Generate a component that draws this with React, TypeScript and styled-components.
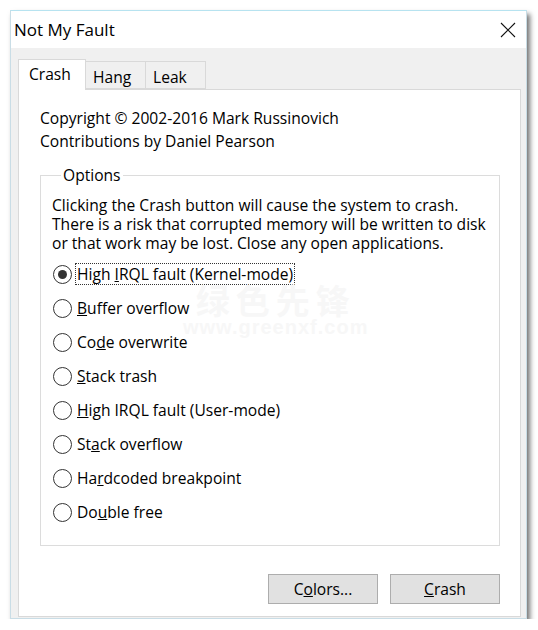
import React from "react";
import styled, { createGlobalStyle } from "styled-components";

const Global = createGlobalStyle`
  html, body { margin: 0; padding: 0; background: #ffffff; }
  body { font-family: "Open Sans", "Noto Sans", sans-serif; color: #000; }
`;

const Window = styled.div`
  margin: 10px 0 0 10px;
  width: 517px;
  height: 609px;
  box-sizing: border-box;
  display: flex;
  flex-direction: column;
  border: 1px solid #c9dde6;
  border-top-color: #b7e3f0;
  background: #f0f0f0;
  box-shadow: 3px 4px 5px rgba(0, 0, 0, 0.55);
`;

const TitleBar = styled.div`
  height: 37px;
  flex: none;
  background: #ffffff;
  display: flex;
  align-items: center;
  justify-content: space-between;
  padding: 0 10px 0 3px;
  font-size: 17px;
`;

const Close = styled.div`
  width: 16px;
  height: 16px;
  display: flex;
`;

const Body = styled.div`
  flex: 1;
  display: flex;
  flex-direction: column;
  padding: 11px 5px 1px 7px;
  position: relative;
`;

const TabRow = styled.div`
  display: flex;
  align-items: flex-end;
  height: 30px;
  flex: none;
`;

const Tab = styled.div<{ $active?: boolean }>`
  box-sizing: border-box;
  height: ${(p) => (p.$active ? "31px" : "28px")};
  margin-bottom: ${(p) => (p.$active ? "-1px" : "0")};
  width: ${(p) => (p.$active ? "68px" : "61px")};
  background: ${(p) => (p.$active ? "#ffffff" : "#f0f0f0")};
  border: 1px solid #d9d9d9;
  border-bottom: ${(p) => (p.$active ? "none" : "1px solid #d9d9d9")};
  margin-left: ${(p) => (p.$active ? "0" : "-1px")};
  padding: ${(p) => (p.$active ? "3px 0 0 10px" : "4px 0 0 7px")};
  font-size: 15.6px;
  position: relative;
  z-index: ${(p) => (p.$active ? 1 : 0)};
`;

const Panel = styled.div`
  flex: 1;
  background: #ffffff;
  border: 1px solid #d9d9d9;
  display: flex;
  flex-direction: column;
  padding: 17px 20px 0 21px;
`;

const InfoLine = styled.div`
  font-size: 15.6px;
  line-height: 23px;
`;

const Group = styled.fieldset`
  margin: 12px 0 0 0;
  border: 1px solid #dcdcdc;
  padding: 0 0 21px 11px;
  height: 381px;
  box-sizing: border-box;
`;

const Legend = styled.legend`
  font-size: 15.6px;
  padding: 0 2px;
  margin-left: 9px;
  line-height: 20px;
`;

const Desc = styled.div`
  font-size: 15.6px;
  line-height: 19px;
  margin-top: 11px;
  margin-bottom: 4px;
`;

const Options = styled.div`
  display: flex;
  flex-direction: column;
`;

const Option = styled.label`
  display: flex;
  align-items: center;
  height: 34px;
  font-size: 15.6px;
  cursor: default;
`;

const Circle = styled.span<{ $on?: boolean }>`
  width: 19px;
  height: 19px;
  box-sizing: border-box;
  flex: none;
  border: 1.5px solid #333333;
  border-radius: 50%;
  background: #ffffff;
  display: flex;
  align-items: center;
  justify-content: center;
  margin-left: 1px;
  margin-right: 4px;
  &::after {
    content: "";
    width: 9px;
    height: 9px;
    border-radius: 50%;
    background: ${(p) => (p.$on ? "#333333" : "transparent")};
  }
`;

const Label = styled.span<{ $focus?: boolean }>`
  padding: 0 1px;
  line-height: 20px;
  outline: ${(p) => (p.$focus ? "1px dotted #333" : "none")};
`;

const Footer = styled.div`
  display: flex;
  justify-content: flex-end;
  gap: 12px;
  margin-top: 28px;
`;

const Button = styled.div`
  width: 110px;
  height: 30px;
  box-sizing: border-box;
  background: #e1e1e1;
  border: 1px solid #adadad;
  display: flex;
  align-items: center;
  justify-content: center;
  font-size: 15.6px;
`;

const Watermark = styled.div`
  position: absolute;
  left: 172px;
  top: 235px;
  color: #f7f7f7;
  font-family: "Noto Sans CJK SC", sans-serif;
  font-weight: 700;
  text-align: center;
  line-height: 1;
  pointer-events: none;
`;

const WmBig = styled.div`
  font-size: 34px;
  letter-spacing: 6px;
`;

const WmSmall = styled.div`
  font-family: "Liberation Sans", sans-serif;
  font-size: 20px;
  letter-spacing: 1px;
`;

const items: { pre: string; key: string; post: string; on?: boolean }[] = [
  { pre: "High ", key: "I", post: "RQL fault (Kernel-mode)", on: true },
  { pre: "", key: "B", post: "uffer overflow" },
  { pre: "Co", key: "d", post: "e overwrite" },
  { pre: "", key: "S", post: "tack trash" },
  { pre: "", key: "H", post: "igh IRQL fault (User-mode)" },
  { pre: "St", key: "a", post: "ck overflow" },
  { pre: "Ha", key: "r", post: "dcoded breakpoint" },
  { pre: "Do", key: "u", post: "ble free" },
];

export default function App() {
  return (
    <>
      <Global />
      <Window>
        <TitleBar>
          <span>Not My Fault</span>
          <Close>
            <svg width="16" height="16" viewBox="0 0 16 16">
              <path d="M1 1 L15 15 M15 1 L1 15" stroke="#111" strokeWidth="1.1" />
            </svg>
          </Close>
        </TitleBar>
        <Body>
          <TabRow>
            <Tab $active>Crash</Tab>
            <Tab>Hang</Tab>
            <Tab>Leak</Tab>
          </TabRow>
          <Panel>
            <InfoLine>Copyright © 2002-2016 Mark Russinovich</InfoLine>
            <InfoLine>Contributions by Daniel Pearson</InfoLine>
            <Group>
              <Legend>Options</Legend>
              <Desc>
                Clicking the Crash button will cause the system to crash.
                <br />
                There is a risk that corrupted memory will be written to disk
                <br />
                or that work may be lost. Close any open applications.
              </Desc>
              <Options>
                {items.map((it, i) => (
                  <Option key={i}>
                    <Circle $on={it.on} />
                    <Label $focus={it.on}>
                      {it.pre}
                      <u>{it.key}</u>
                      {it.post}
                    </Label>
                  </Option>
                ))}
              </Options>
            </Group>
            <Footer>
              <Button>
                C<u>o</u>lors...
              </Button>
              <Button>
                <u>C</u>rash
              </Button>
            </Footer>
          </Panel>
          <Watermark>
            <WmBig>绿色先锋</WmBig>
            <WmSmall>www.greenxf.com</WmSmall>
          </Watermark>
        </Body>
      </Window>
    </>
  );
}
